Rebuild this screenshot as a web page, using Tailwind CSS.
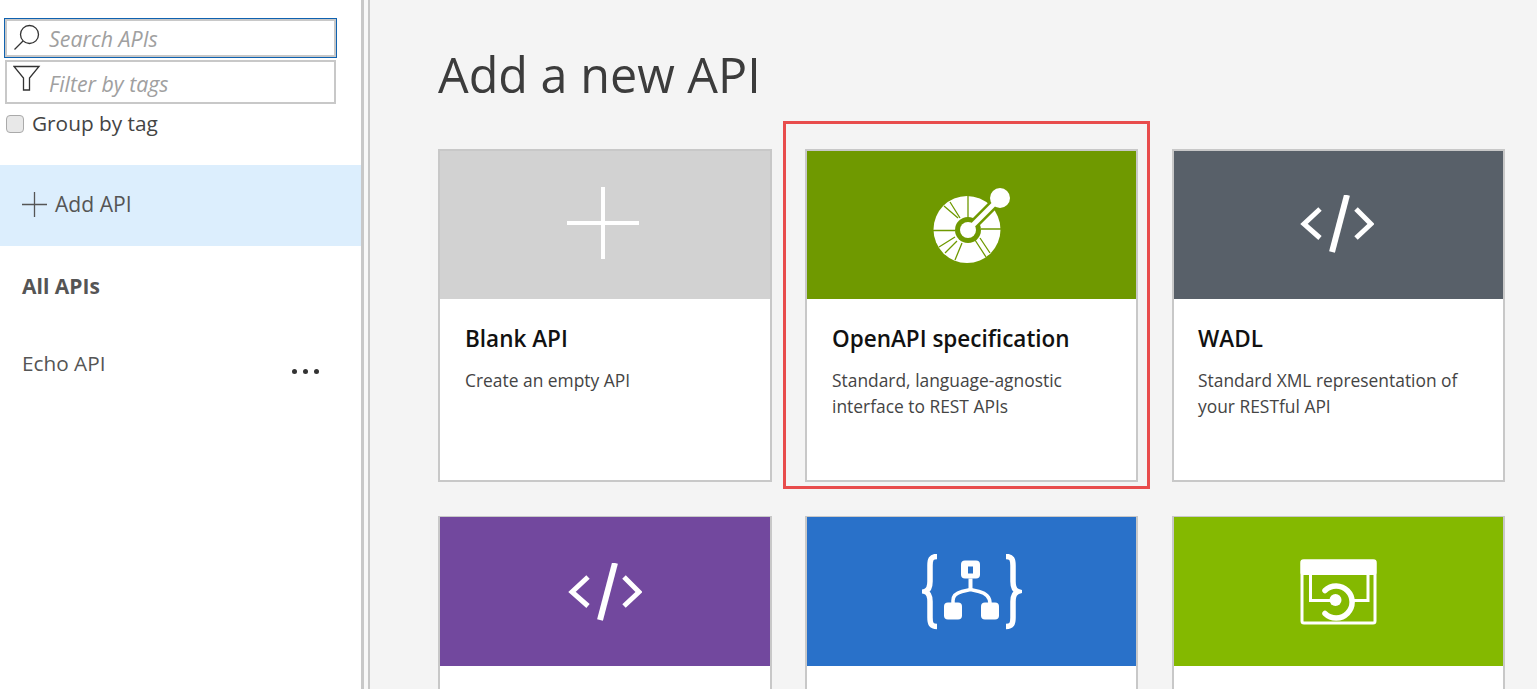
<!DOCTYPE html>
<html lang="en">
<head>
    <meta charset="UTF-8">
    <title>Add a new API</title>
    <script src="https://cdn.jsdelivr.net/npm/@tailwindcss/browser@4"></script>
</head>
<body class="h-[689px] overflow-hidden bg-white font-['Open_Sans',sans-serif]">
    <div class="flex h-[689px] overflow-hidden">
        <!-- sidebar -->
        <aside class="w-[361px] shrink-0 bg-white pt-[18px]">
            <div class="ml-[4px] flex h-[40px] w-[333px] items-center border border-[#0f62b0] bg-white">
                <div class="flex h-full w-full items-center border-2 border-[#c8c8c8] pl-[6px]">
                    <svg width="28" height="28" viewBox="0 0 28 28" fill="none" stroke="#333" stroke-width="1.3" class="shrink-0"><circle cx="16.5" cy="10.5" r="9"/><path d="M10 17 L1.5 25.5"/></svg>
                    <span class="ml-[8px] mt-[2px] text-[21.4px] italic text-[#a0a0a0]">Search APIs</span>
                </div>
            </div>
            <div class="ml-[5px] mt-[2px] flex h-[44px] w-[331px] items-center border-2 border-[#c8c8c8] pl-[6px]">
                <svg width="28" height="28" viewBox="0 0 28 28" fill="none" stroke="#333" stroke-width="1.3" class="mb-[6px] shrink-0"><path d="M1 1.5 H26 L16.5 13 V25 H10.5 V13 Z"/></svg>
                <span class="ml-[8px] mt-[3px] text-[21.3px] italic text-[#a0a0a0]">Filter by tags</span>
            </div>
            <label class="ml-[6px] mt-[6px] flex h-[28px] items-center text-[#444]">
                <span class="h-[18px] w-[18px] rounded-[4px] border border-[#aaaaaa] bg-[#e8e8e8]"></span>
                <span class="ml-[8px] text-[20.8px]">Group by tag</span>
            </label>
            <div class="mt-[27px] flex h-[81px] items-center bg-[#dceefd] pl-[22px] text-[#555]">
                <svg width="25" height="25" viewBox="0 0 25 25" stroke="#555" stroke-width="1.3" class="mb-[2px] shrink-0"><path d="M0 12.5 H25 M12.5 0 V25"/></svg>
                <span class="mb-[4px] ml-[8px] text-[21.1px]">Add API</span>
            </div>
            <div class="mt-[25px] pl-[22px] text-[21px] font-bold text-[#555]">All APIs</div>
            <div class="mt-[45px] flex items-center justify-between pl-[22px] pr-[42px] text-[20.75px] text-[#555]">
                <span>Echo API</span>
                <span class="mt-[16px] flex gap-[6px]">
                    <i class="h-[5px] w-[5px] rounded-full bg-[#333]"></i>
                    <i class="h-[5px] w-[5px] rounded-full bg-[#333]"></i>
                    <i class="h-[5px] w-[5px] rounded-full bg-[#333]"></i>
                </span>
            </div>
        </aside>
        <!-- splitter -->
        <div class="h-full w-[9px] shrink-0 border-x-[3px] border-r-2 border-[#c8c8c8] bg-[#f8f8f8]"></div>
        <!-- main -->
        <main class="relative flex-1 bg-[#f4f4f4] pl-[68px]">
            <h1 class="pt-[35px] text-[48.5px] leading-[78px] text-[#3c3c3c]">Add a new API</h1>
            <div class="mt-[36px] grid grid-cols-[367px_367px_333px] grid-rows-[367px_367px]">
                <!-- row 1 -->
                <div class="h-[333px] w-[334px] border-2 border-[#c8c8c8] bg-white">
                    <div class="flex h-[148px] items-center justify-center bg-[#d2d2d2]">
                        <svg width="72" height="72" viewBox="0 0 72 72" stroke="#fff" stroke-width="4" class="mb-[5px] mr-[5px]"><path d="M0 36 H72 M36 0 V72"/></svg>
                    </div>
                    <div class="px-[25px] pt-[23px]">
                        <h2 class="text-[22.5px] font-semibold leading-[34px] text-[#111]">Blank API</h2>
                        <p class="mt-[11px] text-[17.4px] leading-[26px] text-[#444]">Create an empty API</p>
                    </div>
                </div>
                <div class="h-[333px] w-[333px] border-2 border-[#c8c8c8] bg-white">
                    <div class="flex h-[148px] items-center justify-center bg-[#6f9900]">
                        <svg width="90" height="90" viewBox="27 10 90 90" fill="none">
                            <circle cx="67" cy="59.5" r="33.5" fill="#fff"/>
                            <g stroke="#6f9900" stroke-width="1.3">
                                <path d="M68 26 V48 M81 59 H101 M33 60.5 H55 M44 36 L58 48 M50 32 L60 48 M39 77 L55 67 M45 83 L57 71 M55 90 L62 73 M75 70 L86 87 M80 68 L90 83"/>
                            </g>
                            <circle cx="68" cy="60" r="13" fill="#6f9900"/>
                            <path d="M68 60 L100 28" stroke="#6f9900" stroke-width="10"/>
                            <circle cx="68" cy="60" r="8" fill="#fff"/>
                            <path d="M68 60 L100 28" stroke="#fff" stroke-width="5"/>
                            <circle cx="100" cy="28" r="10" fill="#fff"/>
                        </svg>
                    </div>
                    <div class="px-[25px] pt-[23px]">
                        <h2 class="text-[22.5px] font-semibold leading-[34px] text-[#111]">OpenAPI specification</h2>
                        <p class="mt-[11px] text-[17.4px] leading-[26px] text-[#444]">Standard, language-agnostic<br>interface to REST APIs</p>
                    </div>
                </div>
                <div class="h-[333px] w-[333px] border-2 border-[#c8c8c8] bg-white">
                    <div class="flex h-[148px] items-center justify-center bg-[#586069]">
                        <svg width="74" height="58" viewBox="567 563 74 58" fill="none" stroke="#fff" stroke-width="5" class="mr-[3px] mb-[2px]"><path d="M587 577 L571 592 L587 606 M623 577 L638 592 L623 606"/><path d="M614 563 L599 620" stroke-width="6"/></svg>
                    </div>
                    <div class="px-[24px] pt-[23px]">
                        <h2 class="text-[22.5px] font-semibold leading-[34px] text-[#111]">WADL</h2>
                        <p class="mt-[11px] text-[17.4px] leading-[26px] text-[#444]">Standard XML representation of<br>your RESTful API</p>
                    </div>
                </div>
                <!-- row 2 -->
                <div class="h-[333px] w-[334px] border-2 border-t border-[#c8c8c8] bg-white">
                    <div class="flex h-[149px] items-center justify-center bg-[#72489e]">
                        <svg width="74" height="58" viewBox="567 563 74 58" fill="none" stroke="#fff" stroke-width="5"><path d="M587 577 L571 592 L587 606 M623 577 L638 592 L623 606"/><path d="M614 563 L599 620" stroke-width="6"/></svg>
                    </div>
                </div>
                <div class="h-[333px] w-[333px] border-2 border-t border-[#c8c8c8] bg-white">
                    <div class="flex h-[149px] items-center justify-center bg-[#2971c9]">
                        <svg width="100" height="76" viewBox="22 13.5 100 76" fill="none">
                            <path d="M37 16 C31 16 30 19 30 25 V41 C30 47 28 50 25 51 C28 52 30 55 30 61 V77 C30 83 31 86 37 86 M106 16 C112 16 113 19 113 25 V41 C113 47 115 50 118 51 C115 52 113 55 113 61 V77 C113 83 112 86 106 86" stroke="#fff" stroke-width="5.5"/>
                            <rect x="61" y="20" width="19" height="18" rx="4" fill="#fff"/>
                            <rect x="68" y="26" width="5" height="7" fill="#2971c9"/>
                            <path d="M70.5 38 V50" stroke="#fff" stroke-width="4"/>
                            <path d="M53 63 V60 C53 54 58 52 62 51 L70.5 49 L79 51 C83 52 90 54 90 63" stroke="#fff" stroke-width="3.5"/>
                            <rect x="44" y="62" width="18" height="17" rx="4" fill="#fff"/>
                            <rect x="81" y="62" width="18" height="17" rx="4" fill="#fff"/>
                        </svg>
                    </div>
                </div>
                <div class="h-[333px] w-[333px] border-2 border-t border-[#c8c8c8] bg-white">
                    <div class="flex h-[149px] items-center justify-center bg-[#84b900]">
                        <svg width="90" height="80" viewBox="13.5 11.5 90 80" fill="none">
                            <rect x="21.5" y="20.5" width="73" height="62" rx="2" stroke="#fff" stroke-width="3"/>
                            <rect x="20" y="19" width="76" height="15.5" rx="2" fill="#fff"/>
                            <path d="M30 34 V60 H54 M87.5 34 V60 H72" stroke="#fff" stroke-width="3"/>
                            <path d="M44.5 50 A16 16 0 1 1 44.5 73" stroke="#fff" stroke-width="5.5" stroke-linecap="round"/>
                            <circle cx="55" cy="59.5" r="6" fill="#fff"/>
                        </svg>
                    </div>
                </div>
            </div>
            <!-- highlight box around the OpenAPI card -->
            <div class="absolute left-[413px] top-[121px] h-[368px] w-[367px] border-[3px] border-[#e84c4c]"></div>
        </main>
    </div>
</body>
</html>
